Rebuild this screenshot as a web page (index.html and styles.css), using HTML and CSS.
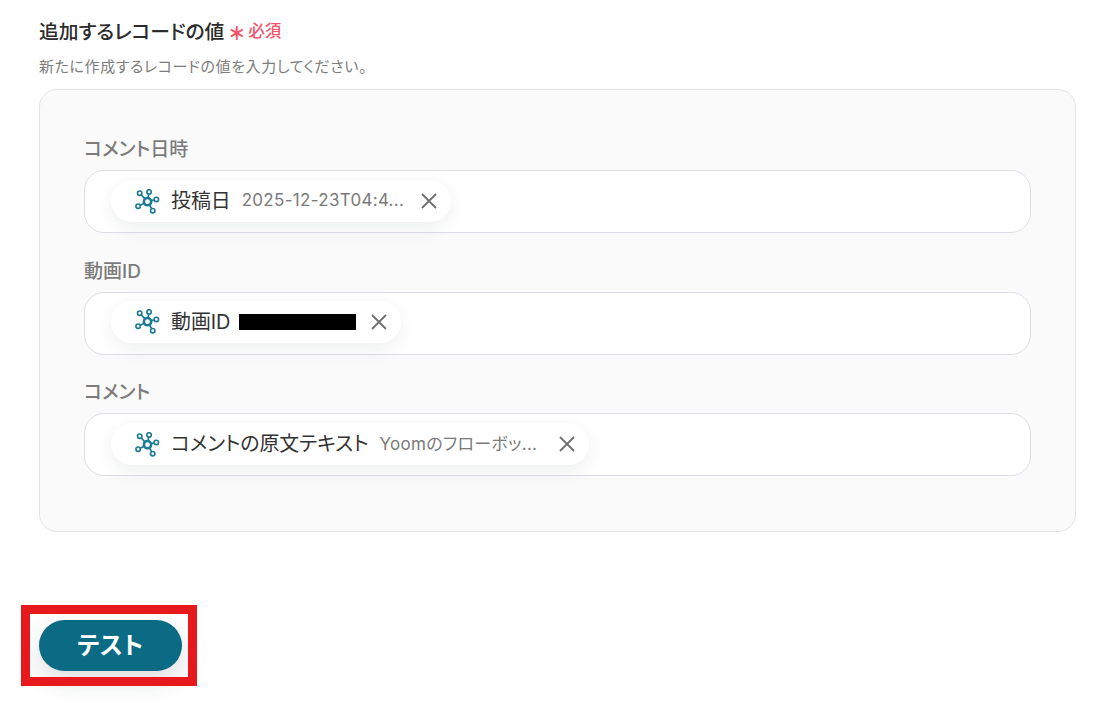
FILE: index.html
```html
<!DOCTYPE html>
<html lang="ja">
<head>
    <meta charset="UTF-8">
    <meta name="viewport" content="width=device-width, initial-scale=1.0">
    <title>追加するレコードの値</title>
    <link rel="stylesheet" href="styles.css">
</head>
<body>
    <svg class="icon-defs" width="0" height="0">
        <symbol id="node-icon" viewBox="0 0 24 24">
            <g fill="none" stroke="#1d7a94" stroke-width="1.6">
                <path d="M12 12.200 4.500 4M12 12.200 13.500 2.800M12 12.200 20 10M12 12.200 17 20.500M12 12.200 3 16.500"/>
                <circle cx="12" cy="12.200" r="3.500" fill="#fff" stroke-width="2.400"/>
                <circle cx="4.500" cy="4" r="2.100" fill="#fff"/>
                <circle cx="13.500" cy="2.800" r="2.100" fill="#fff"/>
                <circle cx="20.500" cy="10" r="2.100" fill="#fff"/>
                <circle cx="17" cy="20.800" r="2.100" fill="#fff"/>
                <circle cx="3" cy="16.500" r="2.100" fill="#fff"/>
            </g>
        </symbol>
        <symbol id="close-icon" viewBox="0 0 18 18">
            <path d="M2 2l14 14M16 2 2 16" fill="none" stroke="#6f6f6f" stroke-width="1.800"/>
        </symbol>
    </svg>

    <div class="container">
        <div class="title-row">
            <h2>追加するレコードの値</h2>
            <span class="asterisk">＊</span>
            <span class="required">必須</span>
        </div>
        <p class="description">新たに作成するレコードの値を入力してください。</p>

        <div class="panel">
            <div class="field">
                <label>コメント日時</label>
                <div class="field-input">
                    <div class="chip">
                        <svg class="chip-icon"><use href="#node-icon"/></svg>
                        <span class="chip-name">投稿日</span>
                        <span class="chip-value">2025-12-23T04:4...</span>
                        <svg class="chip-close"><use href="#close-icon"/></svg>
                    </div>
                </div>
            </div>
            <div class="field">
                <label>動画ID</label>
                <div class="field-input">
                    <div class="chip">
                        <svg class="chip-icon"><use href="#node-icon"/></svg>
                        <span class="chip-name">動画ID</span>
                        <span class="chip-redacted"></span>
                        <svg class="chip-close"><use href="#close-icon"/></svg>
                    </div>
                </div>
            </div>
            <div class="field">
                <label>コメント</label>
                <div class="field-input">
                    <div class="chip">
                        <svg class="chip-icon"><use href="#node-icon"/></svg>
                        <span class="chip-name">コメントの原文テキスト</span>
                        <span class="chip-value">Yoomのフローボッ...</span>
                        <svg class="chip-close"><use href="#close-icon"/></svg>
                    </div>
                </div>
            </div>
        </div>

        <div class="actions">
            <button class="test-button">テスト</button>
            <div class="highlight"></div>
        </div>
    </div>
</body>
</html>
```

FILE: styles.css
```css
/* Reset */
* {
    margin: 0;
    padding: 0;
    box-sizing: border-box;
}

body {
    font-family: Inter, 'Noto Sans CJK JP', sans-serif;
    font-feature-settings: "palt";
    background-color: #fff;
    color: #333;
    min-height: 100vh;
}

.icon-defs {
    position: absolute;
}

.container {
    padding: 17px 32px 0 39px;
}

/* Heading */
.title-row {
    display: flex;
    align-items: center;
    height: 26px;
}

.title-row h2 {
    font-size: 19.8px;
    font-weight: 500;
    color: #2c2c2c;
}

.asterisk {
    margin-left: 5px;
    font-size: 18px;
    font-weight: 900;
    padding-top: 4px;
    color: #f4536a;
}

.required {
    margin-left: 4px;
    font-size: 16.5px;
    font-weight: 500;
    color: #f4536a;
}

.description {
    margin-top: 14px;
    font-size: 15px;
    letter-spacing: 0.6px;
    line-height: 20px;
    color: #7d7d7d;
}

/* Panel */
.panel {
    margin-top: 12px;
    height: 443px;
    padding: 43px 44px 0;
    background-color: #fafafa;
    border: 1px solid #e4e4e8;
    border-radius: 18px;
}

.field {
    margin-bottom: 21.5px;
}

.field label {
    display: block;
    height: 37px;
    font-size: 19px;
    font-weight: 500;
    line-height: 34px;
    color: #7c7c7c;
}

.field-input {
    height: 63px;
    padding: 9px 26px;
    background-color: #fff;
    border: 1px solid #dedee6;
    border-radius: 20px;
}

.field:nth-child(2) .field-input {
    padding-top: 8px;
}

/* Chip */
.chip {
    display: inline-flex;
    align-items: center;
    height: 42px;
    padding: 0 13px 0 24px;
    background-color: #fff;
    border-radius: 21px;
    box-shadow: 0 6px 18px rgba(40, 50, 70, 0.08);
}

.chip-icon {
    width: 25px;
    height: 25px;
    flex-shrink: 0;
}

.chip-name {
    margin-left: 11px;
    padding-bottom: 3px;
    font-size: 19.9px;
    color: #333;
    white-space: nowrap;
}

.chip-value {
    width: 163px;
    margin-left: 11px;
    padding-bottom: 3px;
    font-size: 17px;
    letter-spacing: 0.3px;
    color: #7a7a7a;
    white-space: nowrap;
}

.chip-redacted {
    margin-left: 9px;
    margin-right: -1px;
    width: 117px;
    height: 16px;
    background-color: #000;
}

.chip-close {
    width: 18px;
    height: 18px;
    margin-left: 15px;
    flex-shrink: 0;
}

/* Test button */
.actions {
    position: relative;
    width: 143px;
    margin-top: 88px;
}

.test-button {
    display: block;
    width: 143px;
    height: 51px;
    padding-bottom: 4px;
    font-family: inherit;
    font-feature-settings: "palt";
    font-size: 24px;
    letter-spacing: 0.5px;
    font-weight: 700;
    color: #fff;
    background-color: #0b6b85;
    border: none;
    border-radius: 26px;
    box-shadow: 0 10px 24px rgba(40, 50, 70, 0.16);
}

.highlight {
    position: absolute;
    top: -15px;
    left: -18px;
    width: 176px;
    height: 81px;
    border: 9px solid #e8191c;
    pointer-events: none;
}
```
